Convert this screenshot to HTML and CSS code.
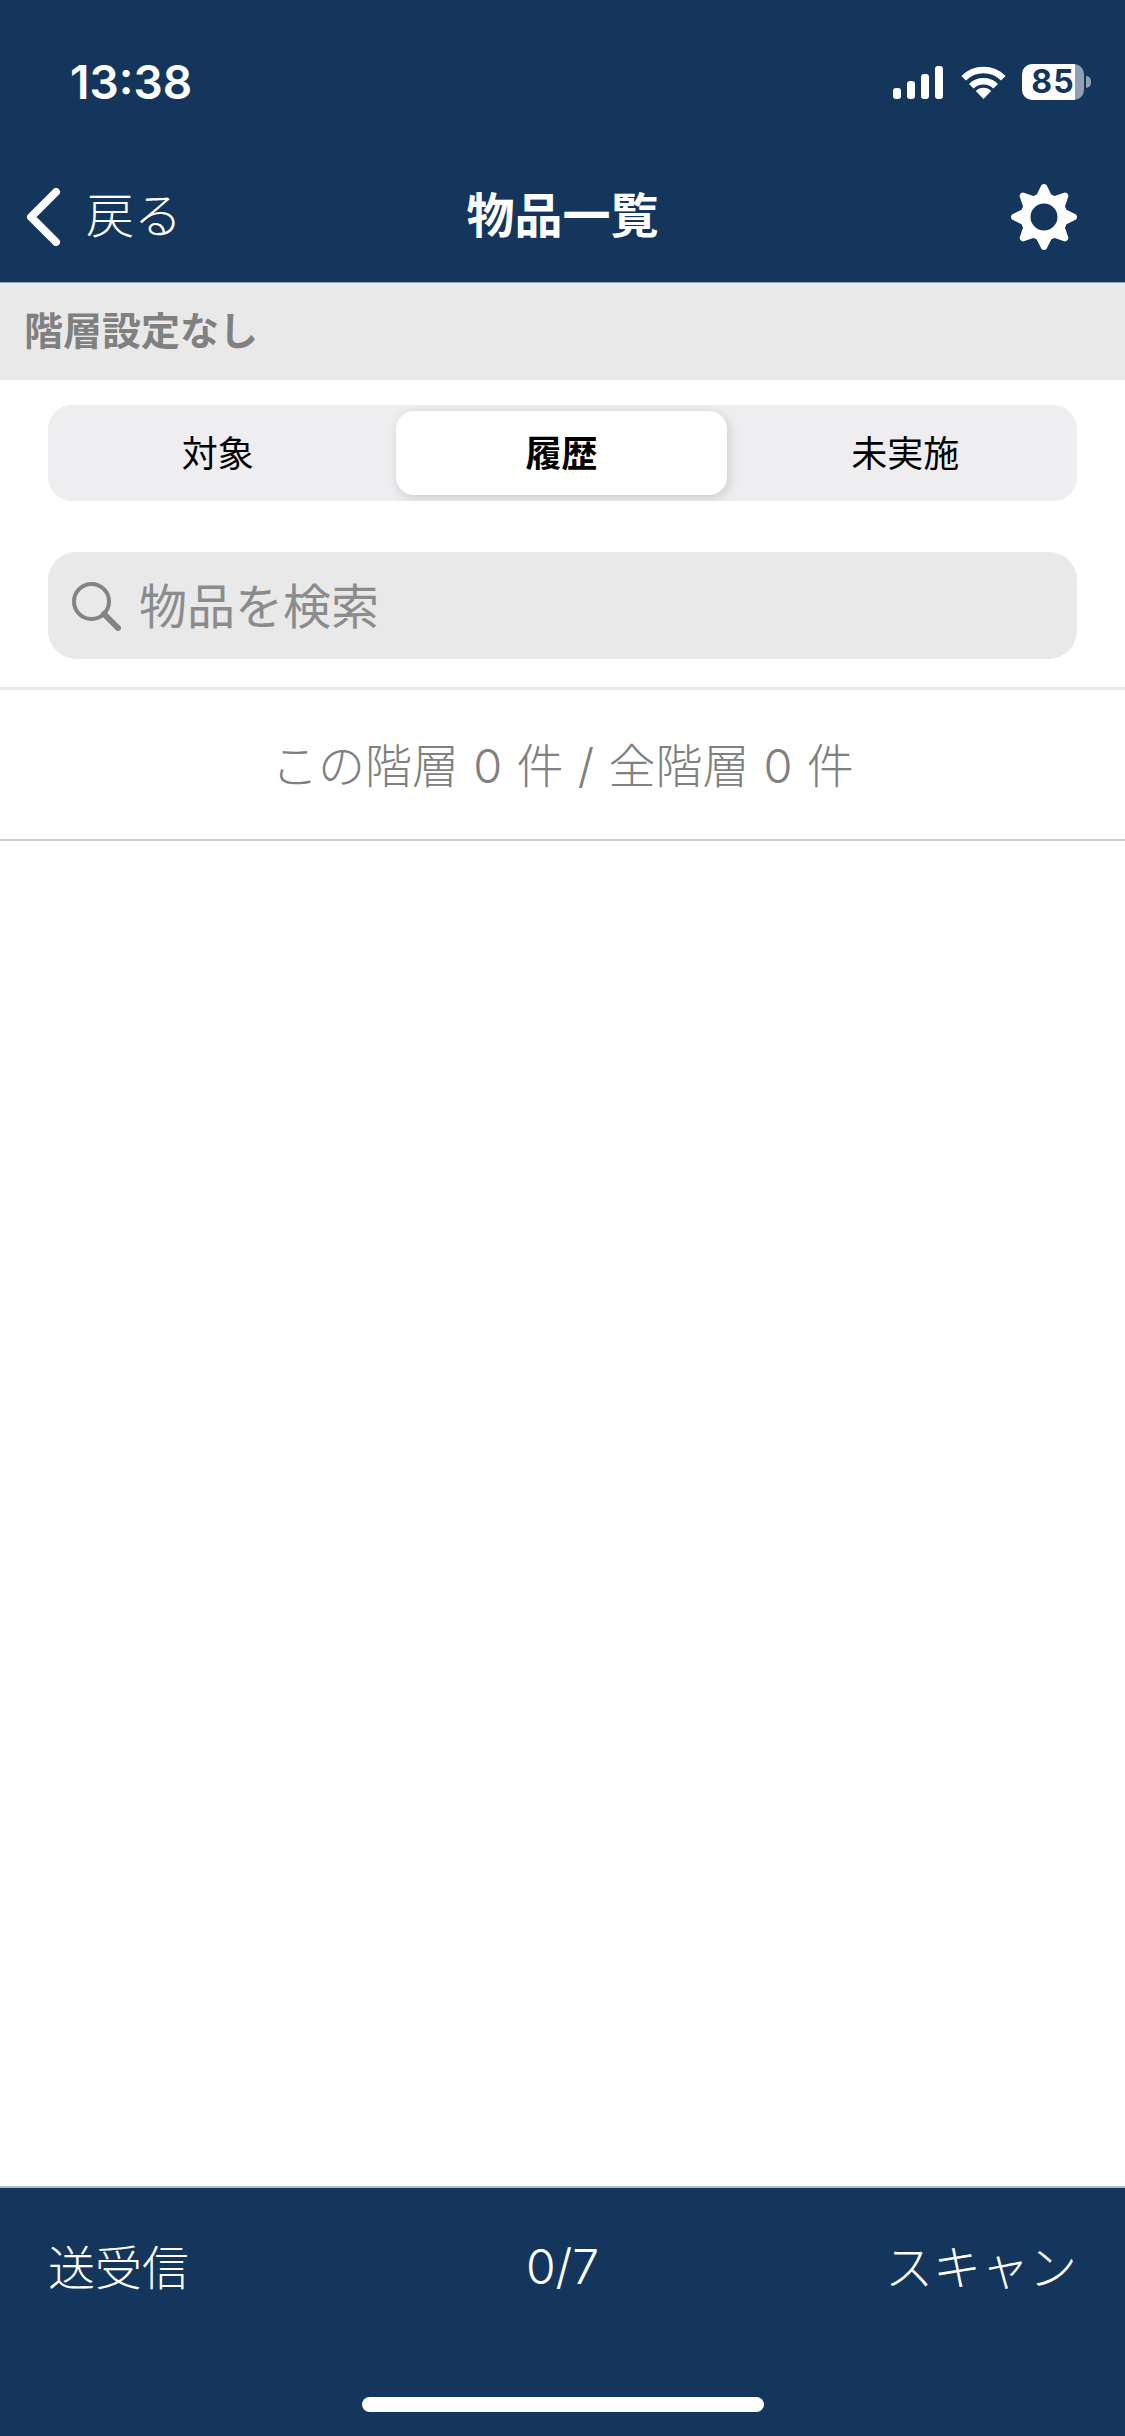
FILE: index.html
```html
<!DOCTYPE html>
<html lang="ja">
<head>
    <meta charset="UTF-8">
    <meta name="viewport" content="width=device-width, initial-scale=1.0">
    <title>物品一覧</title>
    <link rel="stylesheet" href="styles.css">
</head>
<body>
    <div class="app">
        <header class="header">
            <div class="status-bar">
                <span class="time">13:38</span>
                <div class="status-icons">
                    <svg class="signal" width="50" height="33" viewBox="0 0 50 33">
                        <rect x="0" y="22" width="8" height="11" rx="3"/>
                        <rect x="14" y="15" width="8" height="18" rx="3"/>
                        <rect x="28" y="8" width="8" height="25" rx="3"/>
                        <rect x="42" y="0" width="8" height="33" rx="3"/>
                    </svg>
                    <svg class="wifi" width="45" height="33" viewBox="0 0 45 33">
                        <path class="wifi-arc" d="M2.7 12.2A28 28 0 0 1 42.3 12.2"/>
                        <path class="wifi-arc" d="M10.3 20.2A17.3 17.3 0 0 1 34.7 20.2"/>
                        <path d="M22.5 33L14.8 25A11 11 0 0 1 30.2 25Z"/>
                    </svg>
                    <div class="battery">
                        <span class="battery-level">85</span>
                        <span class="battery-cap"></span>
                    </div>
                </div>
            </div>
            <nav class="navbar">
                <a class="back">
                    <svg class="chevron" width="36" height="58" viewBox="0 0 36 58">
                        <path d="M31 4L6 29L31 54"/>
                    </svg>
                    <span class="back-label">戻る</span>
                </a>
                <h1 class="title">物品一覧</h1>
                <svg class="gear" width="66" height="66" viewBox="-33 -33 66 66">
                    <defs>
                        <path id="tooth" d="M-8 -21L-2.5 -32Q0 -34 2.5 -32L8 -21Z"/>
                    </defs>
                    <circle class="gear-ring" r="18.5"/>
                    <use href="#tooth"/>
                    <use href="#tooth" transform="rotate(45)"/>
                    <use href="#tooth" transform="rotate(90)"/>
                    <use href="#tooth" transform="rotate(135)"/>
                    <use href="#tooth" transform="rotate(180)"/>
                    <use href="#tooth" transform="rotate(225)"/>
                    <use href="#tooth" transform="rotate(270)"/>
                    <use href="#tooth" transform="rotate(315)"/>
                </svg>
            </nav>
        </header>

        <div class="floor-bar">階層設定なし</div>

        <div class="tabs">
            <div class="tab">対象</div>
            <div class="tab active">履歴</div>
            <div class="tab">未実施</div>
        </div>

        <div class="search">
            <svg class="search-icon" width="50" height="50" viewBox="0 0 50 50">
                <circle cx="20.5" cy="20.5" r="17.5"/>
                <path d="M33 33L47 47"/>
            </svg>
            <span class="search-text">物品を検索</span>
        </div>

        <div class="count">この階層 0 件 / 全階層 0 件</div>

        <main class="list"></main>

        <footer class="footer">
            <div class="footer-row">
                <span class="sync">送受信</span>
                <span class="progress">0/7</span>
                <span class="scan">スキャン</span>
            </div>
            <div class="home-bar"></div>
        </footer>
    </div>
</body>
</html>
```

FILE: styles.css
```css
body {
    margin: 0;
    font-family: "Noto Sans CJK JP", "Noto Sans", sans-serif;
    background-color: #fff;
}
.app {
    display: flex;
    flex-direction: column;
    height: 2436px;
}
.header {
    background-color: #14365c;
    border-bottom: 1px solid #9aa6b4;
    color: #fff;
}
.status-bar {
    display: flex;
    justify-content: space-between;
    align-items: center;
    height: 164px;
    padding: 0 34px 0 70px;
}
.time {
    font-family: Inter, sans-serif;
    font-size: 46px;
    font-weight: 600;
}
.status-icons {
    display: flex;
    align-items: center;
    gap: 16px;
}
.signal, .wifi path {
    fill: #fff;
}
.signal {
    margin-right: 2px;
}
.wifi .wifi-arc {
    fill: none;
    stroke: #fff;
    stroke-width: 6.5;
}
.battery {
    display: flex;
    align-items: center;
    gap: 2px;
}
.battery-level {
    width: 62px;
    height: 36px;
    line-height: 36px;
    border-radius: 10px;
    background: linear-gradient(to right, #fff 85%, #8fa0b3 85%);
    color: #14365c;
    font-family: Inter, sans-serif;
    font-size: 32px;
    font-weight: 700;
    letter-spacing: 1px;
    text-align: center;
}
.battery-cap {
    width: 5px;
    height: 12px;
    border-radius: 0 6px 6px 0;
    background-color: #8fa0b3;
}
.navbar {
    display: grid;
    grid-template-columns: 1fr auto 1fr;
    align-items: center;
    height: 118px;
    padding: 0 48px 12px;
    box-sizing: border-box;
}
.back {
    display: flex;
    align-items: center;
    gap: 25px;
    margin-left: -23px;
    font-size: 48px;
    font-weight: 300;
}
.back-label {
    padding-bottom: 10px;
}
.chevron path {
    fill: none;
    stroke: #fff;
    stroke-width: 8;
    stroke-linecap: round;
    stroke-linejoin: round;
}
.title {
    margin: 0;
    padding-bottom: 10px;
    font-size: 48px;
    font-weight: 700;
}
.gear {
    justify-self: end;
    fill: #fff;
}
.gear-ring {
    fill: none;
    stroke: #fff;
    stroke-width: 10;
}
.floor-bar {
    height: 97px;
    line-height: 91px;
    padding-left: 24px;
    background-color: #e9e9ea;
    color: #808080;
    font-size: 39px;
    font-weight: 700;
}
.tabs {
    display: grid;
    grid-template-columns: repeat(3, 1fr);
    margin: 25px 48px 0;
    padding: 6px 2px 6px 0;
    border-radius: 24px;
    background-color: #eeeef0;
    overflow: hidden;
}
.tab {
    height: 84px;
    line-height: 81px;
    margin: 0 6px;
    border-radius: 18px;
    color: #000;
    font-size: 36px;
    text-align: center;
}
.tab:first-child {
    padding-right: 3px;
}
.tab:last-child {
    padding-left: 3px;
}
.tab.active {
    background-color: #fff;
    box-shadow: 2px 3px 12px rgba(0,0,0,0.15);
    font-weight: 700;
}
.search {
    display: flex;
    align-items: center;
    gap: 18px;
    height: 107px;
    margin: 51px 48px 0;
    padding-left: 23px;
    border-radius: 28px;
    background-color: #e9e9ea;
}
.search-icon {
    flex: none;
    fill: none;
    stroke: #848484;
    stroke-width: 4;
}
.search-icon path {
    stroke-width: 6;
    stroke-linecap: round;
}
.search-text {
    padding-bottom: 6px;
    color: #8c8c8c;
    font-size: 48px;
}
.count {
    height: 149px;
    line-height: 152px;
    margin-top: 28px;
    border-top: 3px solid #e9e9ea;
    border-bottom: 2px solid #cfcfcf;
    color: #808080;
    font-family: Inter, "Noto Sans CJK JP", sans-serif;
    font-size: 47px;
    font-weight: 300;
    word-spacing: 1px;
    text-align: center;
}
.list {
    flex: 1;
}
.footer {
    height: 250px;
    box-sizing: border-box;
    border-top: 2px solid #a9bccf;
    background-color: #14365c;
    color: #fff;
    font-size: 48px;
    font-weight: 300;
}
.footer-row {
    display: grid;
    grid-template-columns: 1fr auto 1fr;
    align-items: center;
    height: 152px;
    padding: 0 48px;
}
.sync {
    font-size: 47px;
}
.progress {
    padding-top: 4px;
    font-family: Inter, sans-serif;
}
.scan {
    justify-self: end;
}
.home-bar {
    width: 402px;
    height: 15px;
    margin: 57px auto 0;
    border-radius: 8px;
    background-color: #fff;
}
```
